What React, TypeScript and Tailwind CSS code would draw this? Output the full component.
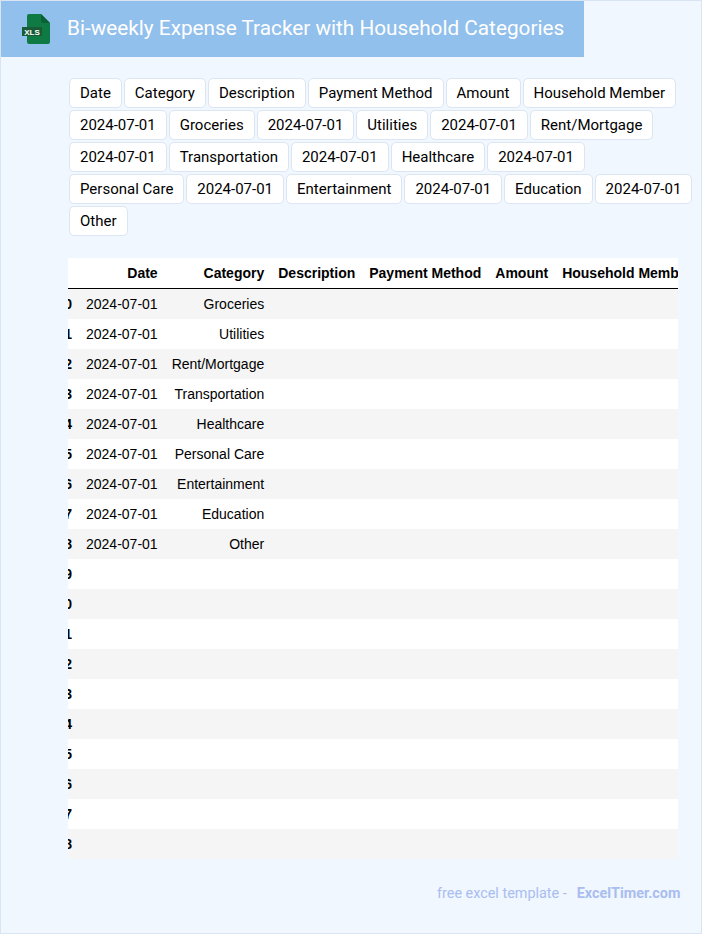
import React from "react";

const chips = ["Date","Category","Description","Payment Method","Amount","Household Member","2024-07-01","Groceries","2024-07-01","Utilities","2024-07-01","Rent/Mortgage","2024-07-01","Transportation","2024-07-01","Healthcare","2024-07-01","Personal Care","2024-07-01","Entertainment","2024-07-01","Education","2024-07-01","Other"];
const cats = ["Groceries","Utilities","Rent/Mortgage","Transportation","Healthcare","Personal Care","Entertainment","Education","Other"];
const rows = Array.from({ length: 19 }, (_, i) => i);
const heads = ["Date","Category","Description","Payment Method","Amount","Household Member"];

function XlsIcon() {
  return (
    <svg width="30" height="32" viewBox="0 0 30 32" className="shrink-0 mt-[3px]">
      <path d="M6 2 Q6 0 8 0 H20 L29 9 V28 Q29 30 27 30 H8 Q6 30 6 28 Z" fill="#107a45" />
      <path d="M20 0 L29 9 H22 Q20 9 20 7 Z" fill="#0b6136" />
      <rect x="1" y="13" width="20" height="9" fill="#185c37" />
      <text x="11" y="20.5" textAnchor="middle" fontSize="8" fontWeight="700" fill="#fff" fontFamily="'Liberation Sans', sans-serif">XLS</text>
    </svg>
  );
}

export default function App() {
  return (
    <div className="relative w-[702px] h-[934px] border border-[#d9e5f2] bg-[#f0f7ff] font-['Roboto',sans-serif] overflow-hidden">
      <header className="w-[583px] h-[56px] bg-[#92c0ec] flex items-center pl-[20px] pb-[1px]">
        <XlsIcon />
        <h1 className="ml-[16px] text-[20.75px] font-normal text-white whitespace-nowrap">Bi-weekly Expense Tracker with Household Categories</h1>
      </header>

      <div className="ml-[68px] mt-[21px] w-[626px] flex flex-wrap gap-x-[1.97px] gap-y-[2px]">
        {chips.map((c, i) => (
          <span key={i} className="h-[30px] px-[10px] flex items-center bg-white border border-[#dce6f2] rounded-[5px] text-[15px] leading-none text-black whitespace-nowrap">{c}</span>
        ))}
      </div>

      <div className="ml-[67px] mt-[22px] w-[610px] overflow-hidden bg-white font-['Liberation_Sans',sans-serif]">
        <table className="-ml-[19px] border-separate border-spacing-0 text-[14px] text-black">
          <thead>
            <tr>
              <th className="h-[31px] w-[30px] min-w-[30px] border-b border-black" />
              {heads.map((h) => (
                <th key={h} className="h-[31px] px-[7px] text-right font-bold whitespace-nowrap border-b border-black">{h}</th>
              ))}
            </tr>
          </thead>
          <tbody>
            {rows.map((r) => (
              <tr key={r} className={`h-[30px] ${r % 2 === 0 ? "bg-[#f5f5f5]" : "bg-white"}`}>
                <th className="pl-0 pr-[7px] text-right font-bold">{r}</th>
                <td className="px-[7px] text-right whitespace-nowrap">{cats[r] ? "2024-07-01" : ""}</td>
                <td className="px-[7px] text-right whitespace-nowrap">{cats[r] ?? ""}</td>
                <td className="px-[7px]" />
                <td className="px-[7px]" />
                <td className="px-[7px]" />
                <td className="px-[7px]" />
              </tr>
            ))}
          </tbody>
        </table>
      </div>

      <footer className="mt-[26px] ml-[436px] flex text-[14.4px] leading-[18px] text-[#a9bdf0] whitespace-nowrap">
        <span>free excel template -</span>
        <span className="ml-[10px] font-bold">ExcelTimer.com</span>
      </footer>
    </div>
  );
}
